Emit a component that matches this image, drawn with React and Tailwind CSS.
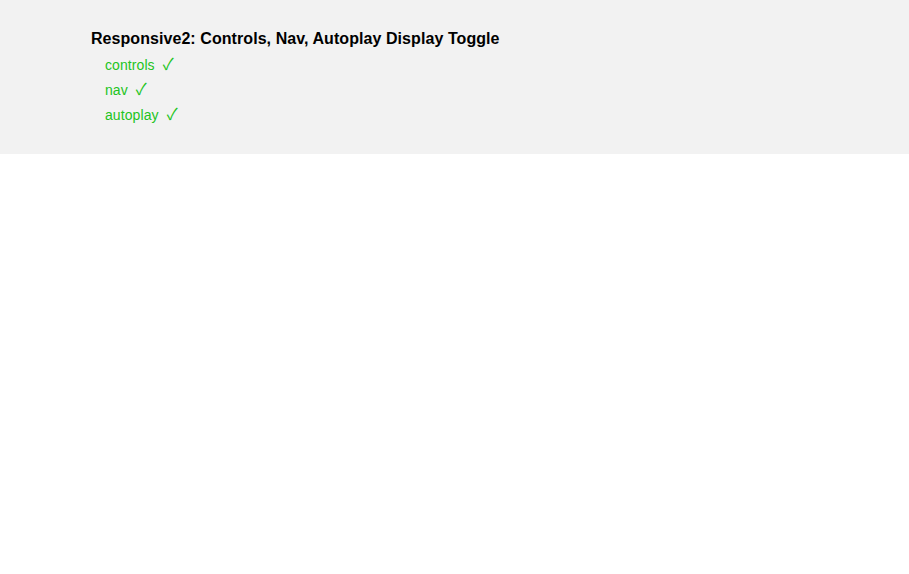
export default function App() {
  const items = ["controls", "nav", "autoplay"];
  return (
    <div className="min-h-screen bg-white" style={{ fontFamily: '"Liberation Sans", Arial, sans-serif' }}>
      <div className="bg-[#f2f2f2] px-[10%] pt-[30px] pb-[26px]">
        <h3 className="text-[16px] leading-[18px] font-bold text-black tracking-[0.07px]">
          Responsive2: Controls, Nav, Autoplay Display Toggle
        </h3>
        <ul className="mt-[5px] pl-[14px]">
          {items.map((it) => (
            <li key={it} className="flex items-center h-[25px] gap-[8px] text-[14px] leading-[25px] text-[#22c422]">
              <span className="tracking-[0.1px]">{it}</span>
              <span className="text-[16px] leading-[25px] -translate-y-[2px]" style={{ fontFamily: '"Noto Sans CJK SC", sans-serif' }}>✓</span>
            </li>
          ))}
        </ul>
      </div>
    </div>
  );
}
